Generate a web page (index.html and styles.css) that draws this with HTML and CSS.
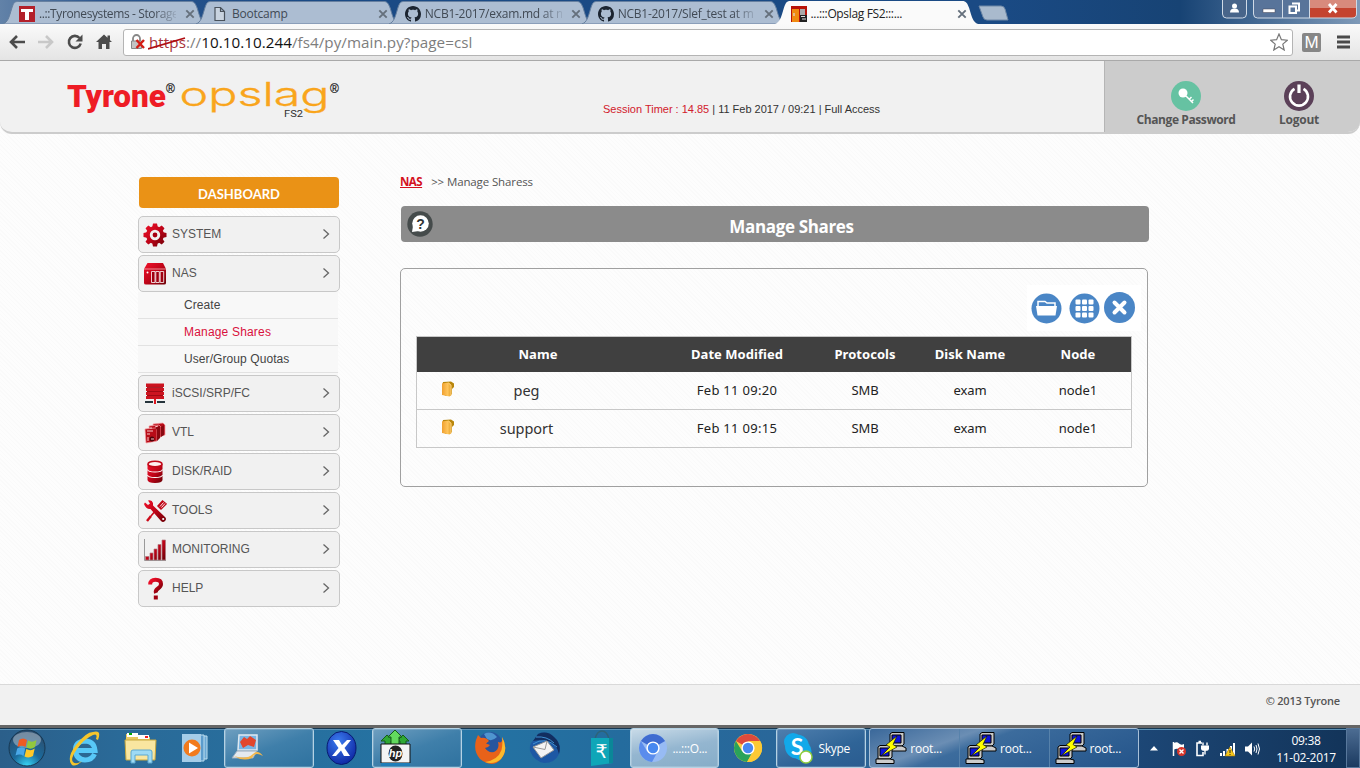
FILE: index.html
```html
<!DOCTYPE html>
<html lang="en">
<head>
<meta charset="utf-8">
<title>...:::Opslag FS2:::...</title>
<link rel="stylesheet" href="styles.css">
</head>
<body>
<svg class="defs" width="0" height="0" aria-hidden="true">
  <defs>
    <linearGradient id="red" x1="0" y1="0" x2="1" y2="1"><stop offset="0" stop-color="#f0102a"/><stop offset=".5" stop-color="#c00418"/><stop offset="1" stop-color="#6a0006"/></linearGradient>
    <linearGradient id="gold" x1="0" y1="0" x2="1" y2="0"><stop offset="0" stop-color="#f0a030"/><stop offset=".6" stop-color="#ffc55c"/><stop offset="1" stop-color="#e09a20"/></linearGradient>
    <radialGradient id="orb" cx=".5" cy="1" r=".9"><stop offset="0" stop-color="#38d8f8"/><stop offset=".45" stop-color="#1a6a9c"/><stop offset="1" stop-color="#2c4f70"/></radialGradient>
    <radialGradient id="blueball" cx=".4" cy=".3" r=".8"><stop offset="0" stop-color="#3b7cf0"/><stop offset="1" stop-color="#0a1f9c"/></radialGradient>
    <symbol id="tab" viewBox="0 0 207 24" preserveAspectRatio="none"><path d="M0 24C5 22 6 18 9 8C11 2 12 1.500 16 1.500H190C194 1.500 195 3 197 8C200 18 201 22 206 24Z" fill="#acbdd2" stroke="#67809f" stroke-width="1"/></symbol>
    <symbol id="x" viewBox="0 0 10 10"><path d="M1.300 1.300L8.700 8.700M8.700 1.300L1.300 8.700" stroke="#65707c" stroke-width="1.900"/></symbol>
    <symbol id="octo" viewBox="0 0 16 16"><path fill="#1b2430" d="M8 0C3.580 0 0 3.580 0 8c0 3.540 2.290 6.530 5.470 7.590.4.070.55-.17.55-.38 0-.19-.01-.82-.01-1.490-2.010.37-2.530-.49-2.690-.94-.09-.23-.48-.94-.82-1.130-.28-.15-.68-.52-.01-.53.63-.01 1.080.58 1.230.82.72 1.210 1.870.87 2.330.66.07-.52.28-.87.51-1.070-1.780-.2-3.640-.89-3.640-3.950 0-.87.31-1.590.82-2.150-.08-.2-.36-1.020.08-2.120 0 0 .67-.21 2.200.82.64-.18 1.320-.27 2-.27s1.360.09 2 .27c1.530-1.040 2.200-.82 2.200-.82.44 1.100.16 1.920.08 2.120.51.56.82 1.270.82 2.150 0 3.070-1.870 3.750-3.650 3.950.29.25.54.73.54 1.480 0 1.070-.01 1.930-.01 2.200 0 .21.15.46.55.38A8.010 8.010 0 0 0 16 8c0-4.420-3.580-8-8-8z"/></symbol>
    <symbol id="chev" viewBox="0 0 8 12"><path d="M1 1.500L6 6L1 10.500" fill="none" stroke="#666" stroke-width="1.300"/></symbol>
    <symbol id="folder" viewBox="0 0 12 16"><path d="M1 1L9 .5L12 2.500V6L10 8V13L4 15L.5 13V3Z" fill="#b8860c"/><path d="M0 2.500L6.500 1.500L9.500 4V14L7.500 15.500L0 14Z" fill="url(#gold)"/><path d="M6.500 2L9 4.200V14" fill="none" stroke="#ffe09a" stroke-width=".8"/></symbol>
    <symbol id="putty" viewBox="0 0 32 32"><g stroke="#000" stroke-width="1"><path d="M15 2L17 .5H29V12L27 14H15Z" fill="#c8c8c8"/><path d="M17 3H26V11H17Z" fill="#0c14d8"/><path d="M13 14H27L31 16V19H13Z" fill="#ccc"/><path d="M3 15L5 13.500H17V25L15 27H3Z" fill="#c8c8c8"/><path d="M5 16H14V24H5Z" fill="#0c14d8"/><path d="M1 27H15L19 28V31.500H1Z" fill="#ccc"/></g><path d="M22 4L11 13L15 15L6 24L22 15L18 12.500Z" fill="#ff0" stroke="#111" stroke-width=".7"/></symbol>
    <symbol id="chrome" viewBox="0 0 30 30"><circle cx="15" cy="15" r="14" fill="#fc4"/><path d="M15 15L2.900 8A14 14 0 0 1 27.100 8Z" fill="#dd4a3c"/><path d="M2.900 8A14 14 0 0 0 14 29L20 18L9 18Z" fill="#2aa35a"/><path d="M14 29A14 14 0 0 0 27.100 8H15L21 18Z" fill="#fbc934"/><circle cx="15" cy="15" r="6.600" fill="#fff"/><circle cx="15" cy="15" r="5.200" fill="#4788f0"/></symbol>
  </defs>
</svg>

<div class="screen">
  <div class="tabstrip">
    <div class="tab first">
      <svg class="tab-shape"><use href="#tab"/></svg>
      <svg class="fav" viewBox="0 0 16 16"><path fill="#b3202a" d="M0 0H16V16H0Z"/><path fill="#fff" d="M2 3H14V6H10V14H6V6H2Z"/></svg>
      <span class="tab-title fade tyr">..::Tyronesystems - Storage</span>
      <svg class="close"><use href="#x"/></svg>
    </div>
    <div class="tab">
      <svg class="tab-shape"><use href="#tab"/></svg>
      <svg class="fav" viewBox="0 0 16 16"><path d="M3 1.500H8.500L12.500 5.500V14.500H3ZM8.500 1.500V5.500H12.500" fill="#c8d3e0" stroke="#49525c" stroke-width="1.200"/></svg>
      <span class="tab-title">Bootcamp</span>
      <svg class="close"><use href="#x"/></svg>
    </div>
    <div class="tab">
      <svg class="tab-shape"><use href="#tab"/></svg>
      <svg class="fav"><use href="#octo"/></svg>
      <span class="tab-title fade git">NCB1-2017/exam.md at m</span>
      <svg class="close"><use href="#x"/></svg>
    </div>
    <div class="tab">
      <svg class="tab-shape"><use href="#tab"/></svg>
      <svg class="fav"><use href="#octo"/></svg>
      <span class="tab-title fade git">NCB1-2017/Slef_test at m</span>
      <svg class="close"><use href="#x"/></svg>
    </div>
    <div class="tab active">
      <svg class="tab-shape" viewBox="0 0 207 24" preserveAspectRatio="none"><path d="M0 24C5 22 6 18 9 8C11 2 12 1 16 1H190C194 1 195 3 197 8C200 18 201 22 206 24Z" fill="#fafafa"/></svg>
      <svg class="fav" viewBox="0 0 16 16"><path fill="#b81208" d="M0 0H16V16H0Z"/><path fill="#f08a12" d="M1 3H8V16H1Z"/><path fill="#aaa" d="M9 3H14V9H9Z"/><path fill="#222" d="M9 9H16V16H9Z"/><path stroke="#ddd" stroke-width="1.200" d="M10 10.500H14M11 13H15M3 7V10"/></svg>
      <span class="tab-title">...:::Opslag FS2:::...</span>
      <svg class="close"><use href="#x"/></svg>
    </div>
    <svg class="newtab" viewBox="0 0 32 16"><path d="M1 1H23Q26 1 27 4L30 15H9Q6 15 5 12Z" fill="#a9bacd" stroke="#6f88a6"/></svg>
    <div class="winbuttons">
      <svg class="user" viewBox="0 0 25 19"><path d="M.5 0V14Q.5 18 4.500 18H20.500Q24.500 18 24.500 14V0" fill="#48658a" stroke="#d0dae6"/><circle cx="12.500" cy="6" r="2.500" fill="#fff"/><path d="M8 12.500Q8 8.500 12.500 8.500T17 12.500Z" fill="#fff"/></svg>
      <svg class="wb" viewBox="0 0 104 19"><path d="M.5 0V14Q.5 18 4.500 18H56V0Z" fill="#58749a"/><path d="M56 0V18H99Q103.500 18 103.500 14V0Z" fill="#c4432f"/><path d="M56 0V8H103.500V0Z" fill="#d88a7c"/><path d="M.5 0V14Q.5 18 4.500 18H99Q103.500 18 103.500 14V0M29.500 0V18M56.500 0V18" fill="none" stroke="#d0dae6"/><path d="M10 9H22V12.500H10Z" fill="#fff" stroke="#445" stroke-width=".5"/><path d="M39 3.500H46V10.500H44M36.500 6.500H43V13H36.500Z" fill="none" stroke="#fff" stroke-width="2"/><path d="M76 4L83.500 12.500M83.500 4L76 12.500" stroke="#fff" stroke-width="2.800"/></svg>
    </div>
  </div>

  <div class="toolbar">
    <svg class="nav" viewBox="0 0 18 16"><path d="M17 8H3M9 2L3 8L9 14" fill="none" stroke="#4c4c4c" stroke-width="2.600"/></svg>
    <svg class="nav" viewBox="0 0 18 16"><path d="M1 8H15M9 2L15 8L9 14" fill="none" stroke="#c8c8c8" stroke-width="2.600"/></svg>
    <svg class="nav" viewBox="0 0 18 16"><path d="M13.500 4A6 6 0 1 0 14.700 9.500" fill="none" stroke="#4c4c4c" stroke-width="2.600"/><path d="M16.500 .5V7.500H9.500Z" fill="#4c4c4c"/></svg>
    <svg class="nav" viewBox="0 0 18 16"><path d="M9 .5L17 8H14.500V15H11V10H7V15H3.500V8H1ZM12.500 1.500H15V6L12.500 4Z" fill="#4c4c4c"/></svg>
    <div class="omnibox">
      <svg class="lock" viewBox="0 0 16 16"><path d="M3 7V4.500A3.500 3.500 0 0 1 10 4.500V7" fill="none" stroke="#888" stroke-width="1.800"/><path d="M1.500 7H11.500V14.500H1.500Z" fill="#c4c4c4" stroke="#888"/><path d="M6.500 6L14 14M14 6L6.500 14" stroke="#d41c14" stroke-width="2.400"/></svg>
      <span class="url"><span class="scheme">https<svg class="strike" viewBox="0 0 38 14"><path d="M0 12L37 1" stroke="#b00d12" stroke-width="1.800"/></svg></span>://<span class="host">10.10.10.244</span>/fs4/py/main.py?page=csl</span>
      <svg class="star" viewBox="0 0 18 18"><path d="M9 1L11.400 6.700L17.300 7.200L12.800 11.100L14.200 17L9 13.800L3.800 17L5.200 11.100L.7 7.200L6.600 6.700Z" fill="#fff" stroke="#777" stroke-width="1.200"/></svg>
    </div>
    <span class="ext">M</span>
    <svg class="burger" viewBox="0 0 14 14"><path d="M1 2H14M1 7H14M1 12H14" stroke="#4a4a4a" stroke-width="2.800"/></svg>
  </div>

  <div class="page">
    <header class="header">
      <svg class="logo" viewBox="0 0 275 44">
        <text class="l-tyrone" x="0" y="29.500" textLength="99" lengthAdjust="spacingAndGlyphs">Tyrone</text>
        <text class="l-reg" x="99" y="15.500">®</text>
        <text class="l-opslag" x="112.500" y="29" textLength="150" lengthAdjust="spacingAndGlyphs">opslag</text>
        <text class="l-fs" x="217" y="40" textLength="19" lengthAdjust="spacingAndGlyphs">FS2</text>
        <text class="l-reg" x="263" y="15.500">®</text>
      </svg>
      <p class="session"><span class="timer">Session Timer : 14.85</span> | 11 Feb 2017 / 09:21 | Full Access</p>
      <div class="account">
        <div class="acct pw"><svg viewBox="0 0 30 30"><circle cx="15" cy="15" r="15" fill="#66c2a2"/><circle cx="12" cy="12" r="4.500" fill="#fff"/><path d="M15 15L22 22M18 18.500L20.500 16M20 21L22.500 18.500" stroke="#fff" stroke-width="1.500"/></svg><span>Change Password</span></div>
        <div class="acct out"><svg viewBox="0 0 30 30"><circle cx="15" cy="15" r="15" fill="#5b4058"/><path d="M10.500 7.800A9 9 0 1 0 19.500 7.800" fill="none" stroke="#fff" stroke-width="2.600"/><path d="M15 3.500V12" stroke="#fff" stroke-width="3.200"/></svg><span>Logout</span></div>
      </div>
    </header>

    <div class="body">
      <nav class="side">
        <div class="dash">DASHBOARD</div>
        <div class="item"><svg class="ico" viewBox="0 0 24 24"><g fill="url(#red)"><circle cx="12" cy="12" r="9"/><path d="M10 .5H14L15 5H9ZM10 23.500H14L15 19H9ZM.5 10V14L5 15V9ZM23.500 10V14L19 15V9ZM2.500 5.300L5.300 2.500L9 5L5 9ZM21.500 5.300L18.700 2.500L15 5L19 9ZM2.500 18.700L5.300 21.500L9 19L5 15ZM21.500 18.700L18.700 21.500L15 19L19 15Z"/></g><circle cx="12" cy="12" r="3.800" fill="#a80012" stroke="#f1f1f1" stroke-width="2.800"/></svg><span>SYSTEM</span><svg class="chev"><use href="#chev"/></svg></div>
        <div class="item open"><svg class="ico" viewBox="0 0 24 24"><path d="M4.500 1H20L23 7V21Q23 22.500 21 22.500H3Q1 22.500 1 21V7Z" fill="url(#red)"/><path d="M1 7H23" stroke="#f6b0b4" stroke-width=".8"/><path d="M8.500 9.500H12V20.500H8.500ZM12.800 9.500H16.300V20.500H12.800ZM17.200 9.500H20.700V20.500H17.200Z" fill="#a00010" stroke="#fff" stroke-width=".8"/><circle cx="4.500" cy="10.500" r="1" fill="#fff"/></svg><span>NAS</span><svg class="chev"><use href="#chev"/></svg></div>
        <div class="sub">
          <div>Create</div><div class="on">Manage Shares</div><div>User/Group Quotas</div>
        </div>
        <div class="item"><svg class="ico" viewBox="0 0 24 24"><path d="M3 1.500H21V5H3ZM3 6H21V9H3ZM3 10H21V13H3ZM3 14H21V17H3Z" fill="#cc1420"/><path d="M4 5.400H20M4 9.500H20M4 13.500H20" stroke="#a00a14" stroke-width="1"/><path d="M12 17V22" stroke="#e01822" stroke-width="2"/><path d="M2 20H10M14 20H22" stroke="#26343c" stroke-width="2"/></svg><span>iSCSI/SRP/FC</span><svg class="chev"><use href="#chev"/></svg></div>
        <div class="item"><svg class="ico" viewBox="0 0 24 24"><g stroke="#f49a9e" stroke-width=".7" fill="#b80c18"><path d="M10 3L20 2L22 4V14L12 16Z"/><path d="M6 5L16 4L18 6V16L8 18Z"/><path d="M2 8L12 7L14 9V20L3 22Z"/></g><path d="M12 7L14 9V20L17 17V5ZM18 6V16L21 14V4Z" fill="#890810"/><circle cx="9" cy="18" r="2.500" fill="#500308"/><path d="M4 10H10M4 13H7M8 18H11M8 8V6M12 6L15 5M5 16V20" stroke="#f7c6c8"/></svg><span>VTL</span><svg class="chev"><use href="#chev"/></svg></div>
        <div class="item"><svg class="ico" viewBox="0 0 24 24"><path d="M4.500 4V20Q5 23 12 23T19.500 20V4Z" fill="url(#red)"/><ellipse cx="12" cy="4" rx="7" ry="2.800" fill="#fff0f0" stroke="#c00818" stroke-width="1.500"/><path d="M4.500 9.500Q5 12 12 12T19.500 9.500M4.500 15Q5 17.500 12 17.500T19.500 15" fill="none" stroke="#fff" stroke-width="1.200"/></svg><span>DISK/RAID</span><svg class="chev"><use href="#chev"/></svg></div>
        <div class="item"><svg class="ico" viewBox="0 0 24 24"><path d="M8 17L4 22" stroke="#cc0a1a" stroke-width="2.400"/><path d="M13.500 10.500L8 17" stroke="#cc0a1a" stroke-width="1.600"/><path d="M15 7L19.500 2L23 5L18 10Z" fill="#c00818" stroke="#c00818" stroke-width="1.500"/><path d="M17 7.500L20.500 3.500M18.500 8.500L22 4.500" stroke="#fff" stroke-width=".9"/><path d="M1 5L2 3.500L5 6L7 4.500L5 1.500Q9 .5 10 4L10 6.500L22 18Q24 20 22 22T18 22L7.500 10Q3 10.500 1 5Z" fill="url(#red)"/><circle cx="20.200" cy="20" r="1.100" fill="#fff"/></svg><span>TOOLS</span><svg class="chev"><use href="#chev"/></svg></div>
        <div class="item"><svg class="ico" viewBox="0 0 24 24"><path d="M1.500 1V22.500H23" fill="none" stroke="#999" stroke-width="1"/><path d="M2.500 18.500H6V22H2.500ZM7 15H10V22H7ZM11 11H14V22H11ZM15 6.500H18V22H15ZM19 2H22.500V22H19Z" fill="url(#red)" stroke="#b07a80" stroke-width=".7"/></svg><span>MONITORING</span><svg class="chev"><use href="#chev"/></svg></div>
        <div class="item"><svg class="ico" viewBox="0 0 24 24"><path d="M7.200 7.500Q7 2.800 12.500 2.800T18 7Q18 9.500 15 11.500T13 16" fill="none" stroke="url(#red)" stroke-width="4"/><path d="M10.800 18.500H14.800V22.500H10.800Z" fill="#a00010"/></svg><span>HELP</span><svg class="chev"><use href="#chev"/></svg></div>
      </nav>

      <main class="main">
        <div class="crumb"><b>NAS</b><span>&gt;&gt; Manage Sharess</span></div>
        <div class="titlebar"><svg class="q" viewBox="0 0 26 26"><circle cx="13" cy="13" r="12.700" fill="#454b4b"/><circle cx="13.500" cy="12.500" r="8.300" fill="#fff"/><path d="M6 15L5 21L12 20Z" fill="#fff"/><text x="13.500" y="17.500" text-anchor="middle">?</text></svg><h1>Manage Shares</h1></div>
        <section class="panel">
          <div class="actions">
            <svg viewBox="0 0 31 31"><circle cx="15.500" cy="15.500" r="15" fill="#4a86c6"/><path d="M7 13V8.500H14L16 10H24V13" fill="#4a86c6" stroke="#fff" stroke-width="1.500"/><path d="M5 13H26L24.500 22.500H6.500Z" fill="#fff"/></svg>
            <svg class="grid" viewBox="0 0 31 31"><circle cx="15.500" cy="15.500" r="15" fill="#4a86c6"/><g fill="#fff"><rect x="6.500" y="6.500" width="5" height="5" rx="1"/><rect x="13" y="6.500" width="5" height="5" rx="1"/><rect x="19.500" y="6.500" width="5" height="5" rx="1"/><rect x="6.500" y="13" width="5" height="5" rx="1"/><rect x="13" y="13" width="5" height="5" rx="1"/><rect x="19.500" y="13" width="5" height="5" rx="1"/><rect x="6.500" y="19.500" width="5" height="5" rx="1"/><rect x="13" y="19.500" width="5" height="5" rx="1"/><rect x="19.500" y="19.500" width="5" height="5" rx="1"/></g></svg>
            <svg class="del" viewBox="0 0 31 31"><circle cx="15.500" cy="15.500" r="15.500" fill="#4a86c6"/><path d="M10.500 10.500L20.500 20.500M20.500 10.500L10.500 20.500" stroke="#fff" stroke-width="4" stroke-linecap="round"/></svg>
          </div>
          <div class="table">
            <div class="row head"><span>Name</span><span>Date Modified</span><span>Protocols</span><span>Disk Name</span><span>Node</span></div>
            <div class="row"><span class="name"><svg><use href="#folder"/></svg><em>peg</em></span><span class="date">Feb 11 09:20</span><span>SMB</span><span>exam</span><span>node1</span></div>
            <div class="row"><span class="name"><svg><use href="#folder"/></svg><em>support</em></span><span class="date">Feb 11 09:15</span><span>SMB</span><span>exam</span><span>node1</span></div>
          </div>
        </section>
      </main>
    </div>
    <footer class="footer">© 2013 Tyrone</footer>
  </div>

  <div class="taskbar">
    <div class="slot s-orb"><svg width="38" height="38" viewBox="0 0 38 38"><circle cx="19" cy="19" r="18" fill="url(#orb)" stroke="#173852"/><ellipse cx="19" cy="11" rx="14" ry="8" fill="#fff" opacity=".35"/><path d="M11 11Q15 8 19 11L17.500 18Q14 15.500 9.500 18Z" fill="#ee5a24"/><path d="M20 11.500Q24 14 28.500 11L27 18Q23 21 18.500 18.500Z" fill="#92c83e"/><path d="M9.200 19.500Q13 17 17.200 19.500L15.500 27Q12 24.500 7.500 26.500Z" fill="#4aa8e8"/><path d="M18.300 20Q22.500 22.500 26.700 19.500L25 27Q21 29.500 16.500 27.500Z" fill="#ffc928"/></svg></div>
    <div class="slot s-ie"><svg width="32" height="38" viewBox="0 0 32 38"><path d="M25.500 25Q23 31 16 31Q7 30.500 6.500 21.500T16 12Q25 12 26 21.500H8" fill="none" stroke="#58c8f8" stroke-width="5"/><path d="M3 36Q-3 29 7 16T24 3Q33 .5 29 11L27 10Q29 4 24 6Q15 10 8 20T4 33Q7 36 13 32Q7 38 3 36Z" fill="#f5c52c"/></svg></div>
    <div class="slot s-exp"><svg width="34" height="34" viewBox="0 0 34 34"><path d="M2 3H12L14 6H26V27H2Z" fill="#e8c860"/><path d="M3 2H14V6H3Z" fill="#fff"/><path d="M5 2H8V4H5Z" fill="#0a0"/><path d="M14 4H25V8H14Z" fill="#fff"/><path d="M21 5H24V7H21Z" fill="#e22"/><path d="M1 9H32L31 29H2Z" fill="#f9e6a0" stroke="#c8a83e"/><path d="M7 32V21Q7 19 9 19H26Q28 19 28 21V32H24V24H11V32Z" fill="#9edaf4" stroke="#5ca8d0"/></svg></div>
    <div class="slot s-wmp"><svg width="28" height="32" viewBox="0 0 28 32"><path d="M8 4H26V27H8Z" fill="#6ba8d4" stroke="#bde"/><path d="M5 3H23V29H5Z" fill="#5c9ccc" stroke="#bde"/><path d="M1 2H20V30H1Z" fill="#a5cde8"/><circle cx="11" cy="16" r="8.500" fill="#f27b1c"/><path d="M8 10.500L17 16L8 21.500Z" fill="#fff"/></svg></div>
    <div class="task blank s-a"><svg width="34" height="32" viewBox="0 0 34 32"><path d="M8 3H26V18H7Z" fill="#78b4e4" stroke="#dfe9f1" stroke-width="1.500"/><path d="M9 10L13 5L16 7L19 4L25 8L23 15L17 13L12 16Z" fill="#e1462c"/><path d="M6 19H26L22 26H1Z" fill="#e4eaf0" stroke="#9ab"/><path d="M3 24Q16 28 22 22Q27 17 32 24Q24 19 21 26Q12 30 3 24Z" fill="#f3b84c"/></svg></div>
    <div class="slot s-x"><svg width="31" height="36" viewBox="0 0 31 36"><ellipse cx="15.500" cy="18" rx="14.500" ry="16.500" fill="url(#blueball)" stroke="#071a70"/><path d="M7 10H13L16 15L21 10H25L18.500 18L24 26H18L15 20.500L10 26H6L12.500 18Z" fill="#fff"/></svg></div>
    <div class="task blank s-hp"><svg width="33" height="38" viewBox="0 0 33 38"><path d="M8 6L2 12H6V16H12V12H15ZM24 6L18 12H21V16H27V12H30Z" fill="#2fa834" stroke="#145c18"/><path d="M16 1L9 8H12V16H20V8H23Z" fill="#62da5e" stroke="#145c18"/><path d="M2 15H31V34H2Z" fill="#f4f4f4" stroke="#111"/><path d="M2 34H31V37H2Z" fill="#1f7db8"/><ellipse cx="16.500" cy="24.500" rx="7" ry="8" fill="#222"/><text class="hp" x="16.500" y="28" text-anchor="middle">hp</text></svg></div>
    <div class="slot s-ff"><svg width="32" height="34" viewBox="0 0 32 34"><circle cx="16" cy="13.500" r="12.500" fill="#27559e"/><path d="M10 3Q17 -1 23 6Q18 11 13 8Z" fill="#4f95cf"/><path d="M2 9L4 4L7 7Q12 6 15 10L12 12.500L16 14Q14 17 11 17Q14 22 20 21Q26 18 24 11Q29 13 28 6Q35 18 27 28T6 28Q-1 20 2 9Z" fill="#e8621a"/><path d="M28 6Q35 18 27 28Q20 34 11 31Q24 29 27.500 19Q29 13 28 6Z" fill="#fcb92c"/></svg></div>
    <div class="slot s-tb"><svg width="32" height="34" viewBox="0 0 32 34"><path d="M9 3Q18 -1 25 6Q33 13 30 23Q26 32 15 32Q5 30 1 20Q0 12 5 9Z" fill="#1d58a4"/><path d="M9 3Q18 -1 25 6Q33 13 30 23Q28 14 20 11T4 10Z" fill="#122e60"/><path d="M7 6Q18 5 25 12M4 13Q16 5 28 16" fill="none" stroke="#3f90d4"/><path d="M4 16L18 10L25 19L12 27Z" fill="#f4f4f4" stroke="#999"/><path d="M4 16L16 18.500L18 10" fill="none" stroke="#999"/></svg></div>
    <div class="slot s-rs"><svg width="26" height="38" viewBox="0 0 26 38"><path d="M6 10Q8 2 13 2T20 10" fill="none" stroke="#2e6378" stroke-width="1.500"/><path d="M2 9H24V34L2 37Z" fill="#0fa6b8"/><path d="M20 9H24V34L20 34.500Z" fill="#0a8798"/><text class="rs" x="12.500" y="29" text-anchor="middle">₹</text></svg></div>
    <div class="task live s-cr"><svg width="30" height="30" viewBox="0 0 30 30"><circle cx="15" cy="15" r="14" fill="#97bbf4"/><path d="M15 15L2.900 8A14 14 0 0 1 27.100 8Z" fill="#3f6cd0"/><path d="M2.900 8A14 14 0 0 0 14 29L20 18H9Z" fill="#5a8cec"/><circle cx="15" cy="15" r="6.600" fill="#fff"/><circle cx="15" cy="15" r="5.200" fill="#4788f0"/></svg><span>...:::O...</span></div>
    <div class="slot s-ch"><svg width="30" height="30"><use href="#chrome"/></svg></div>
    <div class="task s-sk"><svg width="30" height="34" viewBox="0 0 30 34"><circle cx="10" cy="11" r="9" fill="#12a9ea"/><circle cx="19" cy="20" r="9.500" fill="#12a9ea"/><circle cx="14" cy="15.500" r="12" fill="#12a9ea"/><text class="sk" x="14" y="23.500" text-anchor="middle">S</text><circle cx="23" cy="26" r="6" fill="#fff" stroke="#8fce3c" stroke-width="1.500"/></svg><span>Skype</span></div>
    <div class="group">
      <div><svg width="32" height="32"><use href="#putty"/></svg><span>root...</span></div>
      <div><svg width="32" height="32"><use href="#putty"/></svg><span>root...</span></div>
      <div><svg width="32" height="32"><use href="#putty"/></svg><span>root...</span></div>
    </div>
    <div class="tray">
      <svg width="8" height="18" viewBox="0 0 8 18"><path d="M0 10.500L4 6L8 10.500Z" fill="#fff"/></svg>
      <svg class="t-flag" width="16" height="18" viewBox="0 0 16 18"><path d="M2.500 2V16" stroke="#fff" stroke-width="1.500"/><path d="M3 3Q6 1.500 8 3.500T13 4V10Q10 11 8 9.500T3 9.500Z" fill="#fff"/><circle cx="10.500" cy="11.500" r="4.500" fill="#d8352a"/><path d="M8.500 9.500L12.500 13.500M12.500 9.500L8.500 13.500" stroke="#fff" stroke-width="1.400"/></svg>
      <svg width="16" height="18" viewBox="0 0 16 18"><path d="M7 3H2V15.500H8V12M3.500 1.500H6" fill="none" stroke="#fff" stroke-width="1.600"/><path d="M6 5.500H14V8.500Q14 11 10 11T6 8.500Z" fill="#fff"/><path d="M8 2.500V5.500M12 2.500V5.500M10 11V14.500" stroke="#fff" stroke-width="1.400"/></svg>
      <svg class="t-sig" width="16" height="18" viewBox="0 0 16 18"><path d="M0 13H2V16H0ZM3 11H5V16H3ZM6.500 9H8.500V16H6.500ZM10 6H12V16H10ZM13 3H15V16H13Z" fill="#fff"/><path d="M10 7L15 16H5Z" fill="#f8c818" stroke="#a87800" stroke-width=".6"/><path d="M10 10V13M10 14V15" stroke="#222"/></svg>
      <svg width="16" height="18" viewBox="0 0 16 18"><path d="M1 6.500H4L8 2.500V15.500L4 11.500H1Z" fill="#fff"/><path d="M10 6.500Q11.500 9 10 11.500M12 5Q14 9 12 13M14 3.500Q17 9 14 14.500" fill="none" stroke="#fff" stroke-width="1"/></svg>
    </div>
    <div class="clock"><span>09:38</span><span>11-02-2017</span></div>
    <div class="peek"></div>
  </div>
</div>
</body>
</html>
```
FILE: styles.css
```css
* { box-sizing: border-box; }
body { margin: 0; font-family: "Open Sans", "Noto Sans", sans-serif; color: #333; overflow: hidden; }
svg { display: block; flex: none; }
.defs { position: absolute; }
.screen { width: 1360px; height: 768px; display: flex; flex-direction: column; overflow: hidden; }

/* browser tabs */
.tabstrip { height: 24px; flex: none; display: flex; padding-left: 3px; background: linear-gradient(90deg, #6282a8 0, #2c568e 100px, #1a4a85 300px, #1a4a84 1000px, #174374 1180px, #3f6590 1250px, #7f9ab8 1360px); }
.tab { position: relative; width: 192.9px; flex: none; display: flex; align-items: center; padding: 3px 0 0 16px; }
.tab-shape { position: absolute; left: 0; top: 0; width: 204px; height: 24px; }
.tab.active { z-index: 1; }
.fav { position: relative; width: 16px; height: 16px; margin-right: 4px; }
.tab-title { position: relative; width: 137px; font-size: 12px; letter-spacing: -.2px; line-height: 20px; white-space: nowrap; color: #414a55; }
.tab-title.tyr { letter-spacing: -.38px; }
.active .tab-title { color: #222; letter-spacing: -.35px; }
.tab-title.git { letter-spacing: -.25px; }
.fade { -webkit-mask-image: linear-gradient(90deg, #000 115px, rgba(0,0,0,.15) 137px); mask-image: linear-gradient(90deg, #000 115px, rgba(0,0,0,.15) 137px); }
.close { position: relative; width: 10px; height: 10px; margin-left: 9px; }
.newtab { width: 32px; height: 16px; margin: 5px 0 0 11px; }
.winbuttons { margin-left: auto; display: flex; gap: 6px; padding-right: 3px; }
.user { width: 25px; height: 19px; }
.wb { width: 104px; height: 19px; }

.toolbar { height: 37px; flex: none; display: flex; align-items: center; padding: 1px 9px 1px 8px; background: linear-gradient(#fafafa, #e4e4e4); border-bottom: 1px solid #a9a9a9; }
.nav { width: 18px; height: 16px; margin-right: 11px; }
.omnibox { width: 1170px; height: 27px; margin-left: -1px; display: flex; align-items: center; background: #fff; border: 1px solid #b4b4b4; border-radius: 3px; padding: 0 4px 0 6px; }
.lock { width: 16px; height: 16px; margin-right: 3px; }
.url { flex: 1; font-size: 15.200px; line-height: 24px; color: #7d7d7d; letter-spacing: .05px; white-space: nowrap; }
.scheme { position: relative; color: #a8323a; }
.strike { position: absolute; left: -1px; top: 5px; width: 38px; height: 14px; }
.host { color: #111; }
.star { width: 18px; height: 18px; }
.ext { width: 19px; height: 19px; margin-left: 9px; border-radius: 2px; background: #868686; color: #fff; font: 17px/20px "Liberation Sans", sans-serif; text-align: center; }
.burger { width: 14px; height: 14px; margin-left: 15px; }

/* page */
.page { height: 664px; flex: none; display: flex; flex-direction: column; background: repeating-linear-gradient(45deg, #fdfdfd 0, #fdfdfd 2px, #fafafa 2px, #fafafa 3px); }
.header { height: 73px; flex: none; display: flex; background: #f1f1f1; border-bottom: 2px solid #ccc; border-radius: 0 0 12px 12px; overflow: hidden; padding-left: 67px; }
.logo { width: 275px; height: 44px; margin-top: 16px; }
.l-tyrone { font: 900 31px Roboto, sans-serif; fill: #ee1c25; }
.l-opslag { font: 300 33px Inter, sans-serif; fill: #f9a51c; stroke: #f9a51c; stroke-width: .35px; }
.l-fs { font: 9px Roboto, sans-serif; fill: #333; }
.l-reg { font: 12px "Liberation Sans", sans-serif; fill: #222; stroke: #222; stroke-width: .2px; }
.session { margin: 41px 0 0 261px; width: 501px; font: 11px/15px "Liberation Sans", sans-serif; letter-spacing: -.01px; white-space: nowrap; }
.timer { color: #d2202c; }
.account { width: 256px; height: 73px; background: #ccc; border-left: 1px solid #b5b5b5; display: flex; }
.acct { display: flex; flex-direction: column; align-items: center; padding-top: 20px; font-size: 12px; font-weight: 700; line-height: 18px; color: #555; white-space: nowrap; }
.acct svg { width: 30px; height: 30px; }
.acct.pw { margin-left: 31px; width: 100px; letter-spacing: -.4px; }
.acct.out { margin-left: 42px; width: 42px; letter-spacing: -.25px; }

.body { flex: 1; display: flex; padding-left: 138px; }
.side { width: 202px; margin-top: 43px; font-family: "Liberation Sans", sans-serif; }
.dash { height: 31px; margin: 0 1px 8px; border-radius: 4px; background: #ea9216; color: #fff; font: 700 13px/34px Lato, sans-serif; text-align: center; }
.item { height: 37px; margin-bottom: 2px; border: 1px solid #c8c8c8; border-radius: 5px; background: #f1f1f1; display: flex; align-items: center; padding: 0 8px 0 4px; font-size: 12px; color: #555; }
.item span { flex: 1; padding: 0 0 1px 5px; }
.item.open { margin-bottom: 0; }
.ico { width: 24px; height: 24px; }
.chev { width: 9px; height: 12px; margin-bottom: 2px; }
.sub { padding-bottom: 2px; margin-right: 2px; background: #f8f8f8; }
.sub div { height: 27px; padding-left: 46px; border-bottom: 1px solid #e2e2e2; font-size: 12px; line-height: 26px; letter-spacing: .08px; color: #444; }
.sub .on { color: #d8103c; letter-spacing: .18px; }

.main { margin: 40px 0 0 60px; width: 749px; }
.crumb { height: 32px; display: flex; gap: 9px; font-size: 11.500px; line-height: 15px; letter-spacing: -.12px; color: #555; }
.crumb b { color: #d4121e; text-decoration: underline; letter-spacing: -.5px; }
.titlebar { height: 36px; margin-left: 1px; padding-left: 6px; border-radius: 4px; background: #8b8b8b; display: flex; align-items: center; }
.q { width: 26px; height: 26px; margin-right: -26px; }
.q text { font: bold 14px "Liberation Sans", sans-serif; fill: #2f3434; }
.titlebar h1 { flex: 1; margin: 5px 0 0; padding-left: 27px; text-align: center; color: #fff; font-size: 17px; font-weight: 700; line-height: 24px; letter-spacing: -.35px; }
.panel { width: 748px; height: 219px; margin-top: 26px; padding: 16px 15px; border: 1px solid #a0a0a0; border-radius: 5px; }
.actions { height: 46px; width: 114px; margin: 0 -9px 5px auto; background: #fff; display: flex; align-items: center; padding-left: 4px; }
.actions svg { width: 31px; height: 31px; }
.actions .grid { margin-left: 7px; }
.actions .del { margin: 0 0 2px 4px; }
.table { border: 1px solid #c8c8c8; width: 716px; }
.row { display: grid; grid-template-columns: 242px 156px 100px 110px 106px; height: 38px; align-items: center; text-align: center; padding-bottom: 2px; font: 13px/18px "Noto Sans", sans-serif; letter-spacing: -.05px; color: #222; border-top: 1px solid #c8c8c8; }
.row .date { letter-spacing: .3px; }
.row.head { height: 35px; border: 0; background: #404040; color: #fff; font-weight: 700; letter-spacing: .04px; }
.row.head + .row { border-top: 0; height: 37px; padding-bottom: 1px; }
.name { display: grid; grid-template-columns: 62px 95px; align-items: center; }
.name svg { width: 12px; height: 16px; margin: 0 0 2px 25px; }
.name em { font: 14.500px/20px "Noto Sans", sans-serif; color: #333; }
.footer { height: 41px; flex: none; background: #f1f1f1; border-top: 1px solid #d9d9d9; text-align: right; padding: 8px 20px 0 0; font-size: 11px; line-height: 15px; letter-spacing: -.2px; font-weight: 600; color: #555; }

/* taskbar */
.taskbar { height: 43px; flex: none; border-top: 3px solid #666; display: flex; align-items: stretch; color: #fff; font-size: 12px; background: linear-gradient(90deg, #2b5f8a 0, #2a6a98 120px, #2474a4 450px, #246c9e 620px, #2c6497 860px, #1c4675 1145px, #123358 1360px); box-shadow: inset 0 1px #163852, inset 0 2px #5b90b4; }
.slot { display: flex; align-items: center; justify-content: center; }
.s-orb { width: 54px; }
.s-ie { width: 62px; }
.s-exp { width: 50px; }
.s-wmp { width: 58px; }
.s-x { width: 55px; }
.s-ff { width: 58px; padding-right: 2px; }
.s-tb { width: 54px; padding-right: 3px; }
.s-rs { width: 56px; }
.s-ch { width: 57px; }
.task { height: 40px; width: 90px; display: flex; align-items: center; padding: 0 0 0 6px; border: 1px solid #b4d2e4; border-radius: 3px; background: linear-gradient(160deg, #6f9fc0, #3f7faa 50%, #2f729f); box-shadow: inset 0 0 0 1px rgba(255,255,255,.18); white-space: nowrap; }
.s-hp { margin-left: 3px; }
.s-sk { background: linear-gradient(160deg, #4f7fae, #2f6497 60%, #2a5c90); }
.task.live { background: linear-gradient(170deg, #c9dbe8, #94b6d0 50%, #86adc8); padding-left: 7px; }
.task span { padding-left: 5px; font-size: 12px; letter-spacing: -.3px; }
.hp { font: italic bold 11px "Liberation Sans", sans-serif; fill: #fff; }
.sk { font: bold 23px Lato, sans-serif; fill: #fff; }
.rs { font: 19px "DejaVu Sans", sans-serif; fill: #fff; }
.group { width: 270px; margin-left: 3px; display: flex; border: 1px solid #a8c0d8; border-radius: 3px; background: linear-gradient(160deg, #3a689a, #6b8eb4 30%, #3c6c9d 40%, #24548a); }
.group div { flex: 1; display: flex; align-items: center; gap: 3px; padding-left: 5px; border-right: 1px solid #5782ab; letter-spacing: -.2px; }
.group div:last-child { border: 0; }
.tray { display: flex; align-items: center; gap: 8px; padding: 2px 0 0 11px; width: 127px; }
.t-flag { margin-left: 5px; }
.tray svg + .t-sig { margin-left: 1px; }
.clock { width: 80px; display: flex; flex-direction: column; align-items: center; padding-top: 4px; line-height: 17px; font-size: 12px; letter-spacing: -.3px; }
.peek { margin-left: auto; width: 14px; border: 1px solid #58789c; background: linear-gradient(#4c6c92, #1b3a60); }
```
